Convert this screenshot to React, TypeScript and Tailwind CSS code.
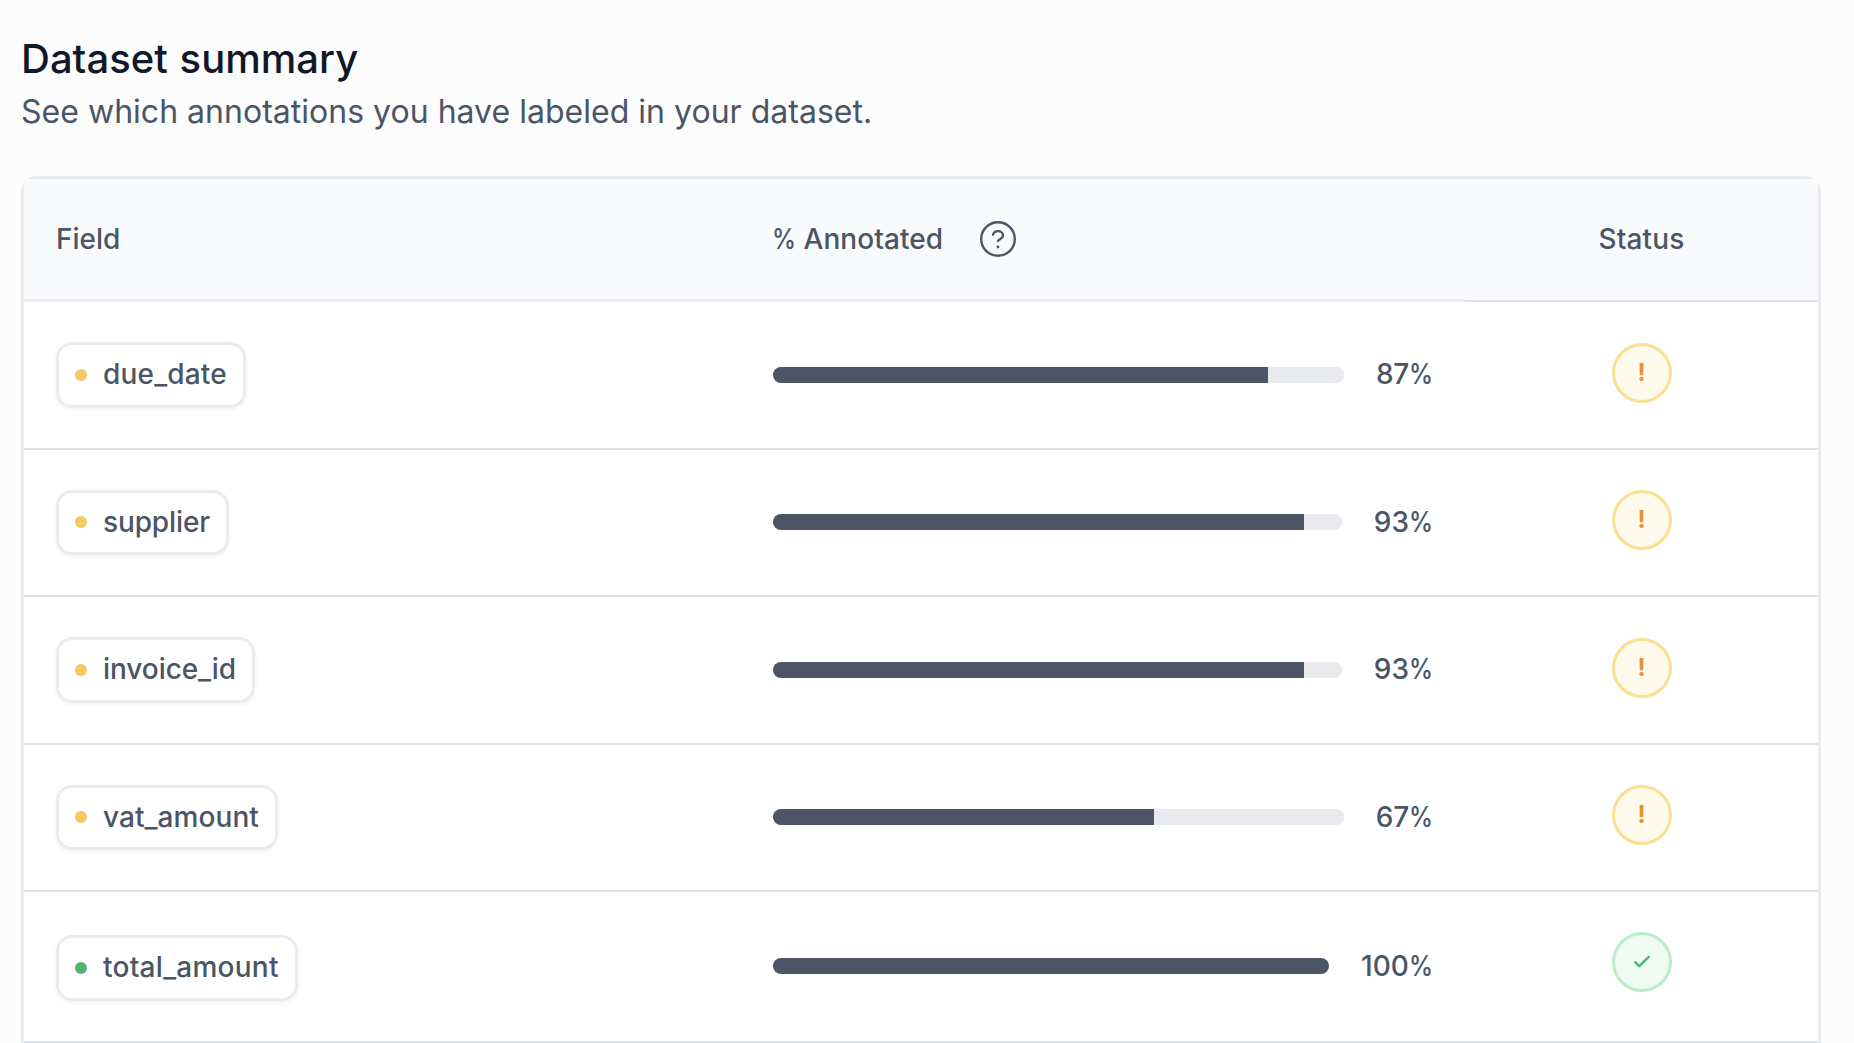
type Row = {
  name: string;
  nameTracking: string;
  dotClass: string;
  value: number;
  valueClass: string;
  fill: string;
  height: string;
  chipPad: string;
  chipHeight: string;
  barPad: string;
  statusPad: string;
};

const rows: Row[] = [
  { name: "due_date", nameTracking: "tracking-[0.18px]", dotClass: "bg-[#f5c861]", value: 87, valueClass: "-mt-0.5 tracking-[-0.25px]", fill: "w-[495px]", height: "h-[148px]", chipPad: "pt-[40px]", chipHeight: "h-[66px]", barPad: "pt-[52px]", statusPad: "pt-[41px]" },
  { name: "supplier", nameTracking: "tracking-[-0.12px]", dotClass: "-mt-px bg-[#f5c861]", value: 93, valueClass: "", fill: "w-[531px]", height: "h-[147px]", chipPad: "pt-[40px]", chipHeight: "h-[65px]", barPad: "pt-[51px]", statusPad: "pt-[40px]" },
  { name: "invoice_id", nameTracking: "tracking-[-0.07px]", dotClass: "bg-[#f5c861]", value: 93, valueClass: "-mt-0.5", fill: "w-[531px]", height: "h-[148px]", chipPad: "pt-[40px]", chipHeight: "h-[66px]", barPad: "pt-[52px]", statusPad: "pt-[41px]" },
  { name: "vat_amount", nameTracking: "tracking-[0.07px]", dotClass: "-mt-px bg-[#f5c861]", value: 67, valueClass: "tracking-[-0.25px]", fill: "w-[381px]", height: "h-[147px]", chipPad: "pt-[40px]", chipHeight: "h-[65px]", barPad: "pt-[51px]", statusPad: "pt-[40px]" },
  { name: "total_amount", nameTracking: "tracking-[0.24px]", dotClass: "bg-[#54b371]", value: 100, valueClass: "tracking-[0.1px]", fill: "w-full", height: "h-[151px]", chipPad: "pt-[43px]", chipHeight: "h-[66px]", barPad: "pt-[53px]", statusPad: "pt-[40px]" },
];

function Percent() {
  return (
    <span className="inline-block w-6 tracking-normal">
      <span className="inline-block origin-left scale-x-[0.865]">%</span>
    </span>
  );
}

function HelpIcon() {
  return (
    <svg className="size-[36px] shrink-0" viewBox="0 0 36 36" fill="none" stroke="#4b5565" strokeLinecap="round" strokeLinejoin="round">
      <circle cx="18" cy="18" r="16.8" strokeWidth="2.4" />
      <path d="M13 13.700c.700-2.100 2.600-3.500 5-3.500 2.900 0 5 1.800 5 4.300 0 3.300-4.100 3.500-5.100 5.500" strokeWidth="2.300" />
      <circle cx="18" cy="26" r="1.400" fill="#4b5565" stroke="none" />
    </svg>
  );
}

function Status({ done }: { done: boolean }) {
  if (done) {
    return (
      <div className="flex size-[60px] items-center justify-center rounded-full border-3 border-[#b9edc9] bg-[#eefbf2]">
        <svg className="size-[18px]" viewBox="0 0 18 18" fill="none" stroke="#4fb26e" strokeWidth="2.4" strokeLinecap="round" strokeLinejoin="round">
          <path d="M2.200 9.200 6.200 13.200 15.800 3.900" />
        </svg>
      </div>
    );
  }
  return (
    <div className="flex size-[60px] items-center justify-center rounded-full border-3 border-[#fbdf91] bg-[#fffaec] text-[24px] leading-none font-bold text-[#ea922f]">
      !
    </div>
  );
}

function FieldRow({ row }: { row: Row }) {
  return (
    <div className={`grid grid-cols-[717px_724px_1fr] border-b-2 border-[#dee1e6] bg-white ${row.height}`}>
      <div className={`flex items-start pl-8 ${row.chipPad}`}>
        <div className={`flex items-center gap-4 rounded-2xl border-3 border-[#eaebef] bg-white px-4 shadow-[0_2px_4px_rgba(0,0,0,0.05)] ${row.chipHeight}`}>
          <span className={`size-3 rounded-full ${row.dotClass}`} />
          <span className={`-mt-0.5 ${row.nameTracking}`}>{row.name}</span>
        </div>
      </div>
      <div className={`flex items-start px-8 ${row.barPad}`}>
        <div className="flex h-[42px] w-full items-center gap-8">
          <div className="h-4 flex-1 overflow-hidden rounded-full bg-[#e9eaee]">
            <div className={`h-full bg-[#4b5565] ${row.fill}`} />
          </div>
          <span className={row.valueClass}>
            {row.value}
            <Percent />
          </span>
        </div>
      </div>
      <div className={`flex items-start justify-center ${row.statusPad}`}>
        <Status done={row.value === 100} />
      </div>
    </div>
  );
}

export default function App() {
  return (
    <main className="h-screen overflow-hidden bg-[#fcfcfc] pr-[33px] pl-[21px] font-['Inter',sans-serif] text-[28px] leading-[42px] font-medium text-[#4b5565]">
      <h1 className="pt-[31px] text-[40px] leading-[56px] font-medium tracking-[0.02px] text-[#111827] [word-spacing:1px]">Dataset summary</h1>
      <p className="pt-px text-[32px] leading-[48px] font-normal tracking-[0.02px]">See which annotations you have labeled in your dataset.</p>
      <section className="mt-[40px] rounded-t-2xl border-3 border-b-0 border-[#e9ebee]">
        <div className="grid h-[123px] grid-cols-[717px_724px_1fr] bg-[#f9fafc]">
          <div className="flex items-center border-b-3 border-[#e9ebee] pl-8">Field</div>
          <div className="flex items-center gap-[37px] border-b-3 border-[#e9ebee] pl-8">
            <span className="-ml-px tracking-[0.07px]">
              <Percent /> Annotated
            </span>
            <HelpIcon />
          </div>
          <div className="flex items-center justify-center border-b-2 border-[#dfe1e7] pb-px tracking-[0.15px]">Status</div>
        </div>
        {rows.map((row) => (
          <FieldRow key={row.name} row={row} />
        ))}
      </section>
    </main>
  );
}
